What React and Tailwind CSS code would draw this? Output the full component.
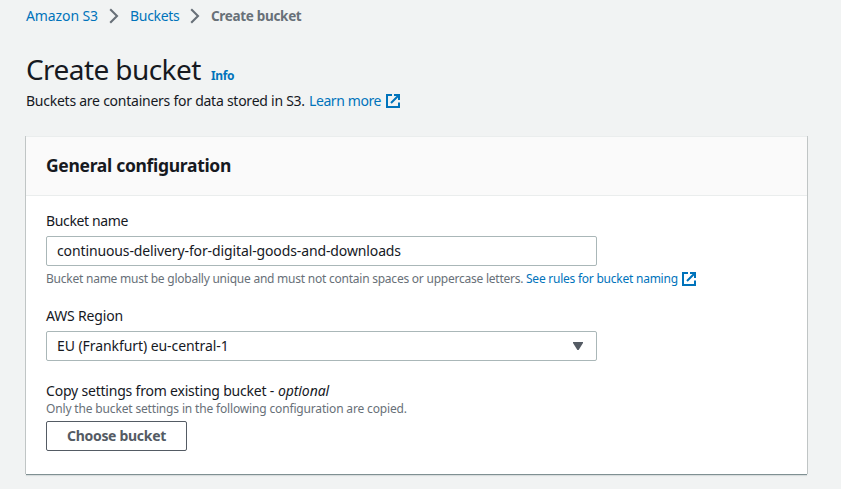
function ExternalIcon() {
  return (
    <svg viewBox="0 0 14 14" className="h-3.5 w-3.5 shrink-0" fill="none" stroke="#0073bb" strokeWidth="2">
      <path d="M6 1H1v12h12V8.5" />
      <path d="M8 1h5v5M12.5 1.5L5 9" />
    </svg>
  );
}

function Chevron() {
  return (
    <svg viewBox="0 0 10 16" className="h-4 w-2.5 shrink-0" fill="none" stroke="#687078" strokeWidth="2.1">
      <path d="M1.2 1.2L8 8L1.2 14.8" />
    </svg>
  );
}

export default function App() {
  return (
    <div className="h-[489px] w-[841px] overflow-hidden bg-[#f1f3f3] pt-[5px] pl-[26px] font-['Noto_Sans','Open_Sans',sans-serif] text-[14px] leading-[22px] whitespace-nowrap text-[#16191f]">
      <nav className="flex h-[22px] items-center">
        <a className="w-[83px] tracking-[-0.1px] text-[#0073bb]">Amazon S3</a>
        <Chevron />
        <a className="ml-[11px] w-[60px] tracking-[-0.3px] text-[#0073bb]">Buckets</a>
        <Chevron />
        <span className="ml-[11px] text-[13.5px] font-bold tracking-[-0.32px] text-[#687078]">Create bucket</span>
      </nav>

      <header className="mt-6">
        <div className="flex h-9 items-baseline">
          <h1 className="w-[185px] text-[28px] leading-9 tracking-[-0.58px]">Create bucket</h1>
          <a className="text-[12px] leading-[18px] font-bold tracking-[-0.4px] text-[#0073bb]">Info</a>
        </div>
        <div className="mt-[3px] flex h-[22px] items-center">
          <p className="w-[283px] tracking-[-0.25px]">Buckets are containers for data stored in S3.</p>
          <a className="flex items-center tracking-[-0.41px] text-[#0073bb]">
            <span className="w-[77px]">Learn more</span>
            <ExternalIcon />
          </a>
        </div>
      </header>

      <section className="mt-6 h-[338px] w-[781px] border-t border-[#eaeded] bg-white shadow-[0_1px_0_0_#7f9092,0_2px_1px_0_rgba(0,28,36,0.1),1px_0_0_0_#c4c9c9,-1px_0_0_0_#c4c9c9]">
        <div className="h-[59px] border-b border-[#eaeded] bg-[#fafafa] pt-[17px] pl-5">
          <h2 className="text-[17.5px] leading-[22px] font-bold tracking-[-0.31px]">General configuration</h2>
        </div>

        <div className="px-5 pt-3.5">
          <label className="block tracking-[-0.36px]">Bucket name</label>
          <div className="mt-1 h-[30px] w-[551px] rounded-[2px] border border-[#aab7b8] bg-white px-2.5 py-[3px] tracking-[-0.12px]">
            continuous-delivery-for-digital-goods-and-downloads
          </div>
          <div className="mt-1 flex h-[18px] items-center text-[12px] leading-[18px] text-[#687078]">
            <span className="w-[480px] tracking-[-0.235px]">Bucket name must be globally unique and must not contain spaces or uppercase letters.</span>
            <a className="flex items-center tracking-[-0.24px] text-[#0073bb]">
              <span className="w-[156px]">See rules for bucket naming</span>
              <ExternalIcon />
            </a>
          </div>

          <label className="mt-[17px] block tracking-[-0.17px]">AWS Region</label>
          <div className="mt-1 flex h-[30px] w-[551px] items-center justify-between rounded-[2px] border border-[#aab7b8] bg-white pr-[13px] pl-2.5 tracking-[-0.07px]">
            <span>EU (Frankfurt) eu-central-1</span>
            <svg viewBox="0 0 10 8" className="h-2 w-2.5" fill="#545b64">
              <path d="M0 0h10v1L5.6 8H4.4L0 1z" />
            </svg>
          </div>

          <p className="mt-[19px] flex">
            <span className="w-[232px] tracking-[-0.2px]">Copy settings from existing bucket -</span>
            <i className="tracking-[-0.1px]">optional</i>
          </p>
          <p className="-mt-[2px] text-[12px] leading-[18px] tracking-[-0.16px] text-[#687078]">Only the bucket settings in the following configuration are copied.</p>
          <button className="mt-[3px] block h-[30px] w-[141px] rounded-[2px] border border-[#545b64] bg-white leading-[22px] font-bold tracking-[-0.3px] text-[#545b64]">
            Choose bucket
          </button>
        </div>
      </section>
    </div>
  );
}
